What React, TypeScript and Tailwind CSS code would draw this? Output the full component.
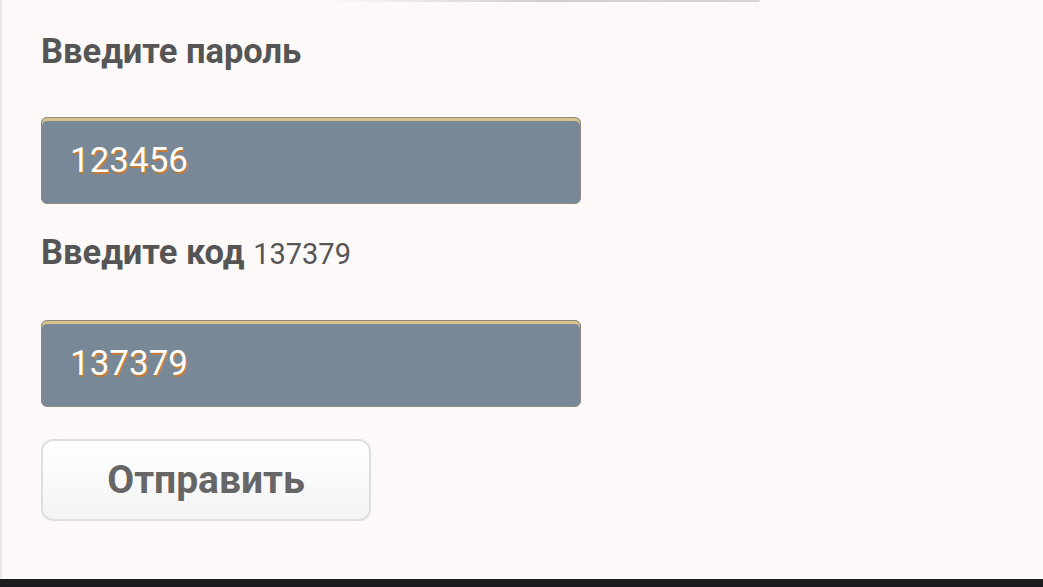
export default function App() {
  return (
    <div className="flex h-[587px] w-[1043px] flex-col bg-[#1c1c20] font-['Roboto','Liberation_Sans',sans-serif]">
      <div className="relative flex h-[579px] flex-col border-l-2 border-[#ebe9e8] bg-[#fdf9f8] pl-[39px] pt-[31px]">
        <div className="absolute left-[323px] top-0 h-[2px] w-[435px] rounded-b-full bg-gradient-to-r from-[#fdf9f8] via-[#cfcfcf] to-[#d5d5d5]" />
        <label className="text-[34.5px] font-bold leading-[40px] text-[#555555]">Введите пароль</label>
        <div className="mt-[46px] flex h-[87px] w-[540px] items-center rounded-[6px] border border-[#8d8b7f] bg-[#788896] pl-[28px] shadow-[inset_0_3px_0_#d8c488] text-[35px] leading-[40px] text-white [text-shadow:1px_2px_0_#c27b33]">
          123456
        </div>
        <label className="mt-[28px] text-[34.5px] font-bold leading-[40px] text-[#555555]">
          Введите код <span className="text-[29px] font-normal">137379</span>
        </label>
        <div className="mt-[46px] flex h-[87px] w-[540px] items-center rounded-[6px] border border-[#8d8b7f] bg-[#788896] pl-[28px] shadow-[inset_0_3px_0_#d8c488] text-[35px] leading-[40px] text-white [text-shadow:1px_2px_0_#c27b33]">
          137379
        </div>
        <button
          type="button"
          className="mt-[32px] flex h-[82px] w-[330px] items-center justify-center rounded-[12px] border-2 border-[#dedede] bg-gradient-to-b from-white to-[#f4f4f4] text-[39px] font-bold leading-[44px] text-[#666666]"
        >
          Отправить
        </button>
      </div>
    </div>
  );
}
